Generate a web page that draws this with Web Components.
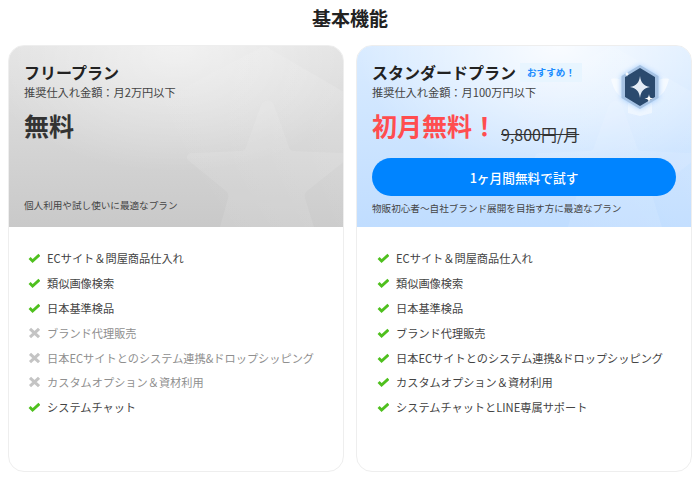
<!DOCTYPE html>
<html lang="ja">
<head>
<meta charset="utf-8">
<style>
  html, body { margin: 0; background: #fff; }
  body { font-family: "Noto Sans CJK JP", "Noto Sans", sans-serif; color: #222; }
</style>
</head>
<body>

<plan-page>
  <plan-card kind="free">
    <span slot="name">フリープラン</span>
    <span slot="sub">推奨仕入れ金額：月2万円以下</span>
    <span slot="price">無料</span>
    <span slot="note">個人利用や試し使いに最適なプラン</span>
    <plan-feature>ECサイト＆問屋商品仕入れ</plan-feature>
    <plan-feature>類似画像検索</plan-feature>
    <plan-feature>日本基準検品</plan-feature>
    <plan-feature off>ブランド代理販売</plan-feature>
    <plan-feature off>日本ECサイトとのシステム連携&amp;ドロップシッピング</plan-feature>
    <plan-feature off>カスタムオプション＆資材利用</plan-feature>
    <plan-feature>システムチャット</plan-feature>
  </plan-card>
  <plan-card kind="standard">
    <span slot="name">スタンダードプラン</span>
    <span slot="badge">おすすめ！</span>
    <span slot="sub">推奨仕入れ金額：月100万円以下</span>
    <span slot="price">初月無料！</span>
    <span slot="old">9,800円/月</span>
    <span slot="cta">1ヶ月間無料で試す</span>
    <span slot="note">物販初心者〜自社ブランド展開を目指す方に最適なプラン</span>
    <plan-medal slot="medal"></plan-medal>
    <plan-feature>ECサイト＆問屋商品仕入れ</plan-feature>
    <plan-feature>類似画像検索</plan-feature>
    <plan-feature>日本基準検品</plan-feature>
    <plan-feature>ブランド代理販売</plan-feature>
    <plan-feature>日本ECサイトとのシステム連携&amp;ドロップシッピング</plan-feature>
    <plan-feature>カスタムオプション＆資材利用</plan-feature>
    <plan-feature>システムチャットとLINE専属サポート</plan-feature>
  </plan-card>
</plan-page>

<script>
// page: title plus the two cards side by side
class PlanPage extends HTMLElement {
  constructor() {
    super();
    this.attachShadow({ mode: 'open' });
    this.shadowRoot.innerHTML = `
      <style>
        :host { display: block; height: 478px; box-sizing: border-box; padding: 0 0 6px 8px; overflow: hidden; }
        h2 {
          margin: 0; height: 45px; box-sizing: border-box; padding-top: 4px;
          text-align: center; font-size: 19px; line-height: 28px; font-weight: 700; color: #222;
        }
        .cards { display: grid; grid-template-columns: 336px 336px; gap: 12px; }
      </style>
      <h2>基本機能</h2>
      <div class="cards"><slot></slot></div>
    `;
  }
}
customElements.define('plan-page', PlanPage);

// one pricing card: coloured head and feature list
class PlanCard extends HTMLElement {
  constructor() {
    super();
    this.attachShadow({ mode: 'open' });
    this.shadowRoot.innerHTML = `
      <style>
        :host { display: block; height: 427px; }
        .card {
          height: 100%; box-sizing: border-box; border: 1px solid #eeeeee; border-radius: 16px;
          overflow: hidden; background: #fff;
        }
        .head {
          position: relative; height: 182px; margin: -1px -1px 0; box-sizing: border-box;
          padding: 17px 16px 0; display: flex; flex-direction: column; overflow: hidden;
          background:
            radial-gradient(ellipse 60% 70% at 50% 0, rgba(255,255,255,.55) 0%, rgba(255,255,255,0) 100%),
            linear-gradient(to bottom, #e2e2e2, #c9c9c9);
        }
        :host([kind="standard"]) .head {
          background:
            radial-gradient(ellipse 60% 75% at 60% 0, rgba(255,255,255,.85) 0%, rgba(255,255,255,0) 100%),
            linear-gradient(to bottom, #d9ebff, #c0ddff);
        }
        .bg { position: absolute; left: 140px; top: 0; width: 196px; height: 182px; }
        .top, .sub, .price, .cta, .note { position: relative; }
        .top { display: flex; align-items: center; gap: 4px; height: 20px; }
        .name { font-size: 16px; line-height: 20px; font-weight: 700; color: #222; }
        .badge {
          font-size: 9.6px; line-height: 19px; padding: 0 7px; font-weight: 700;
          color: #1a8cff; background: #e8f5ff;
        }
        :host([kind="free"]) .badge { display: none; }
        .sub { margin-top: 2px; font-size: 11.2px; line-height: 16px; color: #444; }
        .price { margin-top: 10px; display: flex; align-items: flex-start; gap: 4px; height: 38px; }
        .amount { margin-top: -2px; font-size: 25px; line-height: 34px; font-weight: 700; color: #333; }
        :host([kind="standard"]) .amount { color: #ff4d4f; }
        .old {
          margin-top: 11px; font-size: 16px; line-height: 26px; color: #333; text-decoration: line-through;
        }
        .cta {
          display: none; height: 38px; margin-top: 10px; border-radius: 19px;
          background: #0084ff; color: #fff; font-size: 12.7px; font-weight: 500;
          align-items: center; justify-content: center;
        }
        :host([kind="standard"]) .cta { display: flex; }
        .note { margin-top: auto; padding-bottom: 15px; font-size: 9.6px; line-height: 14px; color: #444; }
        :host([kind="standard"]) .note { padding-bottom: 12px; }
        ::slotted(plan-medal) { position: absolute; right: 20px; top: 14px; }
        .list { padding: 19px 0 0 19px; }
        :host([kind="standard"]) .list { padding-left: 20px; }
      </style>
      <div class="card">
        <div class="head">
          <svg class="bg" viewBox="0 0 196 182" fill="none">
            <defs>
              <linearGradient id="fade" x1="1" y1="0" x2="0.1" y2="0.6">
                <stop offset="0" stop-color="#fff" stop-opacity=".14"/>
                <stop offset="1" stop-color="#fff" stop-opacity="0"/>
              </linearGradient>
            </defs>
            <path d="M110 4 C114 1 118 1 122 4 L196 47 V182 H0 V62 Z" fill="url(#fade)"/>
            <path d="M113 60 C117 54 123 54 126 60 L141 102 C142 105 144 106 147 106 L194 108 C199 108 200 113 197 116 L159 146 C157 148 156 150 157 153 L166 182 H72 L80 153 C81 150 80 148 78 146 L41 116 C37 113 39 108 44 108 L92 106 C95 106 97 105 98 102 Z" fill="#fff" opacity=".1"/>
          </svg>
          <slot name="medal"></slot>
          <div class="top"><span class="name"><slot name="name"></slot></span><span class="badge"><slot name="badge"></slot></span></div>
          <div class="sub"><slot name="sub"></slot></div>
          <div class="price"><span class="amount"><slot name="price"></slot></span><span class="old"><slot name="old"></slot></span></div>
          <div class="cta"><slot name="cta"></slot></div>
          <div class="note"><slot name="note"></slot></div>
        </div>
        <div class="list"><slot></slot></div>
      </div>
    `;
  }
}
customElements.define('plan-card', PlanCard);

// feature row: check or cross, then the label
class PlanFeature extends HTMLElement {
  constructor() {
    super();
    this.attachShadow({ mode: 'open' });
    this.shadowRoot.innerHTML = `
      <style>
        :host {
          display: flex; align-items: center; gap: 7px; height: 24.8px;
          font-size: 11.2px; color: #444;
        }
        :host([off]) { color: #8f8f8f; }
        svg { width: 12px; height: 12px; flex: none; }
      </style>
      <svg viewBox="0 0 12 12"></svg>
      <slot></slot>
    `;
    this.shadowRoot.querySelector('svg').innerHTML = this.hasAttribute('off')
      ? '<path d="M2 1.800 L11 10.200 M11 1.800 L2 10.200" stroke="#c4c4c4" stroke-width="3" fill="none"/>'
      : '<path d="M1.600 6 L4.600 9 L11.400 2.800" stroke="#4fc01e" stroke-width="2.900" fill="none"/>';
  }
}
customElements.define('plan-feature', PlanFeature);

// hexagon medal at the top right of the paid plan
class PlanMedal extends HTMLElement {
  constructor() {
    super();
    this.attachShadow({ mode: 'open' });
    this.shadowRoot.innerHTML = `
      <style>:host { display: block; width: 64px; height: 64px; }</style>
      <svg width="64" height="64" viewBox="0 0 64 64" style="overflow:visible">
        <defs><filter id="glow" x="-40%" y="-40%" width="180%" height="180%"><feGaussianBlur stdDeviation="2.500"/></filter></defs>
        <path d="M3 20 C7 19 11 20 14 21 V38 C9 36 5 29 3 20 Z M61 20 C57 19 53 20 50 21 V38 C55 36 59 29 61 20 Z" fill="#fff" opacity=".6"/>
        <path d="M20 44 H44 V54 L32 57 L20 54 Z" fill="#eef6ff"/>
        <path d="M32 6 L51 17 V39 L32 50 L13 39 V17 Z" fill="#6fb0f8" opacity=".55" filter="url(#glow)"/>
        <path d="M32 7 L49.500 17.500 V38.500 L32 49 L14.500 38.500 V17.500 Z" fill="#a6c2e3" stroke="#a6c2e3" stroke-width="2" stroke-linejoin="round"/>
        <path d="M32 10 L46 18.500 V37.500 L32 46 L18 37.500 V18.500 Z" fill="#2b4a6e" stroke="#2b4a6e" stroke-width="2" stroke-linejoin="round"/>
        <path d="M32 17 C33 24 35.500 26.500 42 28 C35.500 29.500 33 32 32 39 C31 32 28.500 29.500 22 28 C28.500 26.500 31 24 32 17 Z" fill="#e4ecf6"/>
        <path d="M41 35 C41.500 38.500 42 39 45.500 39.500 C42 40 41.500 40.500 41 44 C40.500 40.500 40 40 36.500 39.500 C40 39 40.500 38.500 41 35 Z" fill="#fff"/>
        <path d="M19 12 C19.300 14.200 19.700 14.600 21.500 15 C19.700 15.400 19.300 15.800 19 18 C18.700 15.800 18.300 15.400 16.500 15 C18.300 14.600 18.700 14.200 19 12 Z" fill="#fff"/>
      </svg>
    `;
  }
}
customElements.define('plan-medal', PlanMedal);
</script>
</body>
</html>
